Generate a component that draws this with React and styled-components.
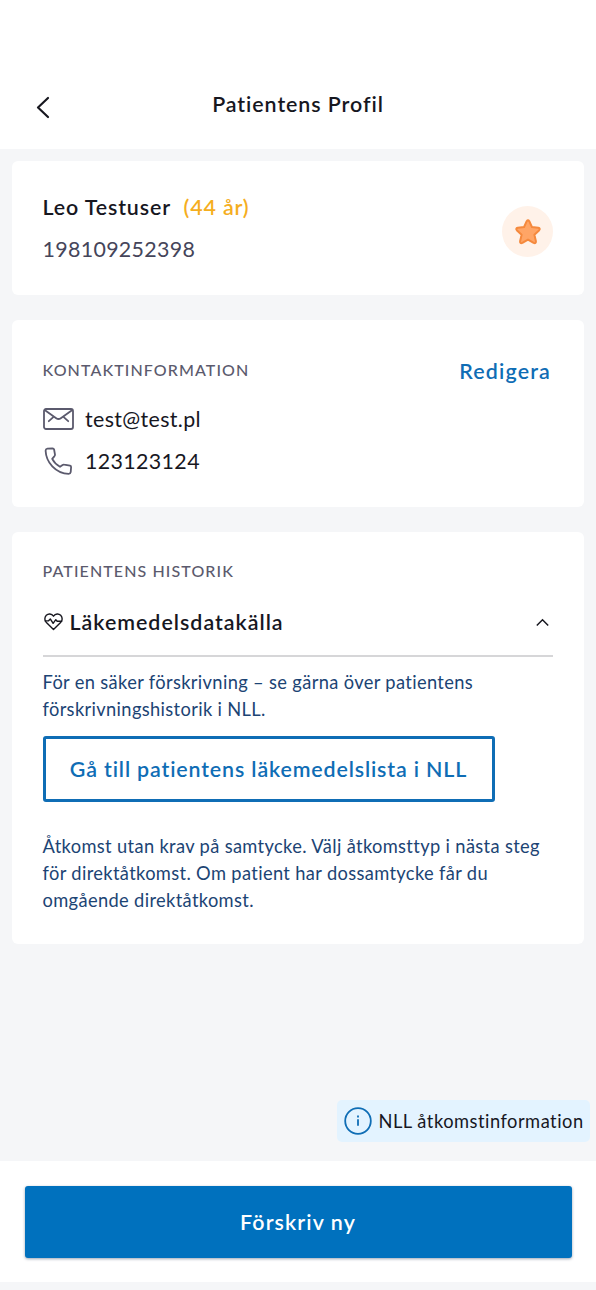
import React, { Component } from 'react';
import styled, { createGlobalStyle } from 'styled-components';

const GlobalStyle = createGlobalStyle`
    * {
        box-sizing: border-box;
    }
    body {
        margin: 0;
        background-color: #f5f6f8;
        font-family: Lato, 'Liberation Sans', sans-serif;
    }
`;

const Page = styled.div`
    display: flex;
    flex-direction: column;
    height: 1290px;
    padding-bottom: 8px;
    overflow: hidden;
    color: #17171f;
`;

const Header = styled.header`
    display: grid;
    grid-template-columns: 80px 1fr 80px;
    align-items: center;
    height: 149px;
    padding: 59px 0 0;
    background-color: #fff;
`;

const BackButton = styled.button`
    display: flex;
    align-items: center;
    padding: 5px 0 0 35px;
    border: none;
    background: none;
    color: #17171f;
`;

const Title = styled.h1`
    margin: 0;
    text-align: center;
    font-size: 21.4px;
    font-weight: 600;
    line-height: 28px;
    letter-spacing: .93px;
`;

const Cards = styled.main`
    display: flex;
    flex: 1;
    flex-direction: column;
    gap: 25px;
    padding: 11.5px 12px 0;
`;

const Card = styled.section`
    height: ${props => props.$height};
    padding: ${props => props.$padding};
    border-radius: 6px;
    background-color: #fff;
`;

const Row = styled.div`
    display: flex;
    align-items: center;
    justify-content: space-between;
`;

const Name = styled.div`
    display: flex;
    gap: 12.5px;
    font-size: 21.4px;
    font-weight: 600;
    line-height: 42px;
    letter-spacing: .88px;
`;

const Age = styled.span`
    color: #f5ae1f;
`;

const PersonalNumber = styled.div`
    font-size: 21.4px;
    line-height: 43px;
    letter-spacing: .32px;
    color: #45455a;
`;

const StarBadge = styled.div`
    display: flex;
    align-items: center;
    justify-content: center;
    width: 51px;
    height: 51px;
    margin-top: 7px;
    padding-top: 1px;
    border-radius: 50%;
    background-color: #fff2e9;
`;

const SectionTitle = styled.h2`
    margin: 0;
    font-size: 16px;
    font-weight: 500;
    line-height: 24px;
    letter-spacing: 1.1px;
    text-transform: uppercase;
    color: #5b5a6d;
`;

const EditLink = styled.button`
    padding: 2px 2px 0 0;
    border: none;
    background: none;
    font-family: inherit;
    font-size: 21.4px;
    font-weight: 600;
    line-height: 28px;
    letter-spacing: 1.15px;
    color: #0f6db5;
`;

const ContactList = styled.div`
    padding-top: 13px;
`;

const ContactRow = styled.div`
    display: flex;
    align-items: center;
    gap: 11.5px;
    height: 42px;
    font-size: 21.4px;
    letter-spacing: .36px;
    svg {
        flex: none;
    }
`;

const AccordionHeader = styled.div`
    display: flex;
    align-items: center;
    height: 71px;
    margin-top: 3px;
    padding: 2px 3px 0 0;
    border-bottom: 2px solid #d6d6d8;
`;

const AccordionTitle = styled.h3`
    flex: 1;
    margin: 0 0 0 6px;
    font-size: 21.4px;
    font-weight: 600;
    letter-spacing: 1px;
`;

const Text = styled.p`
    margin: 0;
    padding-top: ${props => props.$top || '0'};
    font-size: 18.3px;
    line-height: 27.3px;
    letter-spacing: .35px;
    color: #1c4474;
`;

const OutlineButton = styled.button`
    display: block;
    width: 452px;
    height: 66px;
    margin: 12px 0 31px;
    padding: 0;
    border: 3px solid #0f6db5;
    border-radius: 3px;
    background-color: #fff;
    font-family: inherit;
    font-size: 21.4px;
    font-weight: 600;
    letter-spacing: .86px;
    color: #0f6db5;
`;

const InfoTag = styled.div`
    display: flex;
    align-items: center;
    align-self: flex-end;
    gap: 6.5px;
    width: 253px;
    height: 42px;
    margin: 0 6px 19px 0;
    padding-left: 7px;
    border-radius: 5px;
    background-color: #e3f3ff;
    font-size: 18.3px;
    letter-spacing: .5px;
    white-space: nowrap;
`;

const Footer = styled.footer`
    height: 121px;
    padding: 24.5px 24.5px 0;
    background-color: #fff;
`;

const PrimaryButton = styled.button`
    display: block;
    width: 100%;
    height: 72.5px;
    border: none;
    border-radius: 3px;
    background-color: #0071be;
    box-shadow: 0 1px 3px rgba(0, 30, 70, .4);
    font-family: inherit;
    font-size: 21.4px;
    font-weight: 600;
    letter-spacing: 1.1px;
    color: #fff;
`;

const BackIcon = () => (
    <svg width="16" height="24" viewBox="0 0 16 24" fill="none" stroke="currentColor" strokeWidth="2.2" strokeLinecap="round" strokeLinejoin="round">
        <path d="M13 3 L3 12.5 L13 22" />
    </svg>
);

const StarIcon = () => (
    <svg width="28" height="28" viewBox="0 0 28 28" fill="#ffa566" stroke="#f5893d" strokeWidth="2" strokeLinejoin="round">
        <path d="M12.7 3.2 Q14 1.2 15.3 3.2 L17.9 9 L24.2 9.8 Q26.8 10.4 25 12.4 L20.4 16.7 L21.9 23.3 Q22.1 25.9 19.6 24.9 L14 21.6 L8.4 24.9 Q5.9 25.9 6.1 23.3 L7.6 16.7 L3 12.4 Q1.2 10.4 3.8 9.8 L10.1 9 Z" />
    </svg>
);

const MailIcon = () => (
    <svg width="31" height="22" viewBox="0 0 31 22" fill="none" stroke="#5b5a6d" strokeWidth="1.8" strokeLinecap="round" strokeLinejoin="round">
        <rect x="1" y="1" width="29" height="20" rx="2" />
        <path d="M2 2.3 L13.2 10.2 Q15.5 11.8 17.8 10.2 L29 2.3 M10.3 9.2 L5.8 13.2 M20.7 9.2 L25.2 13.2" />
    </svg>
);

const PhoneIcon = () => (
    <svg width="31" height="30" viewBox="0 -.7 31 30" fill="none" stroke="#5b5a6d" strokeWidth="1.8" strokeLinejoin="round">
        <path d="M4.4 2 L9.5 1.6 Q10.8 1.6 11.1 2.8 L12 8 Q12.1 9 11.3 9.7 L9.2 12.2 Q11.7 17.1 17 20.1 L19.6 18.3 Q20.3 17.8 21.2 18 L27 19 Q28.2 19.3 28.1 20.5 L27.7 25.5 Q27.4 27.1 25.7 27.1 Q16.4 27 9.3 19.6 Q3 13 2.6 4 Q2.6 2.3 4.4 2 Z" />
    </svg>
);

const HeartIcon = () => (
    <svg width="21" height="19" viewBox="0 -.5 21 19" fill="none" stroke="#17171f" strokeWidth="1.4" strokeLinecap="round" strokeLinejoin="round">
        <path d="M10.5 3.7 C8.5 .8 5.2 1 3.3 2.8 C1.3 4.8 1.4 8 3.4 10 L10.5 17 L17.6 10 C19.6 8 19.7 4.8 17.7 2.8 C15.8 1 12.5 .8 10.5 3.7 Z" />
        <path d="M2.3 8.4 H5.3 L7.3 6.4 L10.1 10.8 L12.8 7.2 L14.2 8.8 H18.7" />
    </svg>
);

const ChevronUp = () => (
    <svg width="15" height="10" viewBox="0 -.5 15 10" fill="none" stroke="#17171f" strokeWidth="1.5">
        <path d="M1.8 8 L7.5 2.2 L13.2 8" />
    </svg>
);

const InfoIcon = () => (
    <svg width="28" height="28" viewBox="0 0 28 28" fill="none" stroke="#0f6db5" strokeWidth="1.8">
        <circle cx="14" cy="14" r="12.8" />
        <path d="M14 12.2 V18.7 M14 8.6 V10.4" />
    </svg>
);

class App extends Component {
    render() {
        return (
            <Page>
                <GlobalStyle />
                <Header>
                    <BackButton aria-label="Tillbaka"><BackIcon /></BackButton>
                    <Title>Patientens Profil</Title>
                </Header>
                <Cards>
                    <Card $height="134.5px" $padding="25px 31px 0 30.5px">
                        <Row>
                            <div>
                                <Name>Leo Testuser <Age>(44 år)</Age></Name>
                                <PersonalNumber>198109252398</PersonalNumber>
                            </div>
                            <StarBadge><StarIcon /></StarBadge>
                        </Row>
                    </Card>
                    <Card $height="187px" $padding="35px 31px 0 30.5px">
                        <Row>
                            <SectionTitle>Kontaktinformation</SectionTitle>
                            <EditLink>Redigera</EditLink>
                        </Row>
                        <ContactList>
                            <ContactRow><MailIcon /> test@test.pl</ContactRow>
                            <ContactRow><PhoneIcon /> 123123124</ContactRow>
                        </ContactList>
                    </Card>
                    <Card $height="412px" $padding="27px 31px 0 30.5px">
                        <SectionTitle>Patientens historik</SectionTitle>
                        <AccordionHeader>
                            <HeartIcon />
                            <AccordionTitle>Läkemedelsdatakälla</AccordionTitle>
                            <ChevronUp />
                        </AccordionHeader>
                        <Text $top="12px">
                            För en säker förskrivning – se gärna över patientens<br />
                            förskrivningshistorik i NLL.
                        </Text>
                        <OutlineButton>Gå till patientens läkemedelslista i NLL</OutlineButton>
                        <Text>
                            Åtkomst utan krav på samtycke. Välj åtkomsttyp i nästa steg<br />
                            för direktåtkomst. Om patient har dossamtycke får du<br />
                            omgående direktåtkomst.
                        </Text>
                    </Card>
                </Cards>
                <InfoTag><InfoIcon /> NLL åtkomstinformation</InfoTag>
                <Footer>
                    <PrimaryButton>Förskriv ny</PrimaryButton>
                </Footer>
            </Page>
        )
    }
}

export default App;
